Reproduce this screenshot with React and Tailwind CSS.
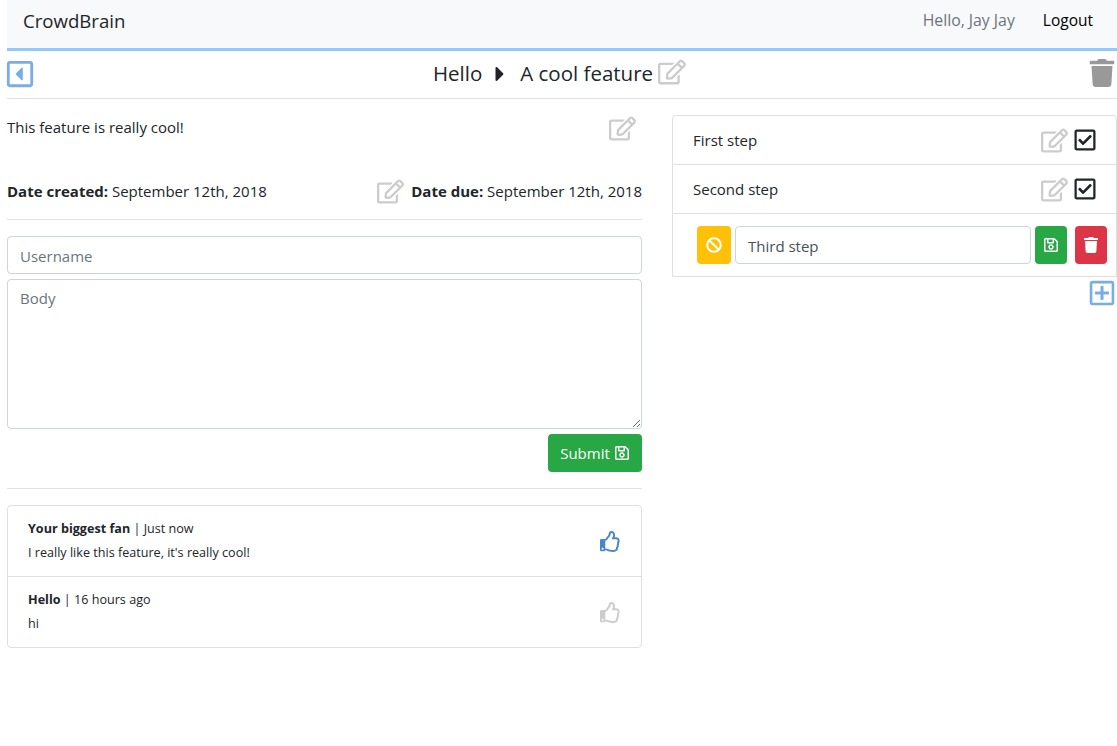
import {
  FaBan,
  FaCaretRight,
  FaRegCaretSquareLeft,
  FaRegCheckSquare,
  FaRegEdit,
  FaRegPlusSquare,
  FaRegSave,
  FaRegThumbsUp,
  FaTrash,
} from 'react-icons/fa'

const steps = ['First step', 'Second step']

const comments = [
  { author: 'Your biggest fan', when: 'Just now', body: "I really like this feature, it's really cool!", liked: true },
  { author: 'Hello', when: '16 hours ago', body: 'hi', liked: false },
]

function Comment({ author, when, body, liked }) {
  return (
    <div className="flex h-[71px] items-center justify-between border-b border-[#dfdfdf] px-5 last:h-[70px] last:border-b-0">
      <div className="text-[12.6px] leading-[18px]">
        <p className="mb-[6px]">
          <span className="font-bold">{author}</span> | {when}
        </p>
        <p>{body}</p>
      </div>
      <FaRegThumbsUp size={21} className={liked ? 'text-[#4a86d0]' : 'text-[#cccccc]'} />
    </div>
  )
}

export default function App() {
  return (
    <div className="min-h-[746px] bg-white pl-[7px] text-[15px] text-[#212529] font-['Open_Sans',sans-serif]">
      <nav className="flex h-[51px] items-center justify-between border-b-[3px] border-[#90c8ff] bg-[#f8f9fa] pb-[6px] pl-4 pr-6">
        <span className="text-[18.6px]">CrowdBrain</span>
        <div className="flex items-center gap-7 text-[15.5px]">
          <span className="text-[15.8px] text-[#6c757d]">Hello, Jay Jay</span>
          <span className="text-black">Logout</span>
        </div>
      </nav>

      <div className="flex h-[48px] items-center justify-between border-b border-[#e2e2e2] pb-[2px]">
        <FaRegCaretSquareLeft size={30} className="-ml-[2px] text-[#7aade6]" />
        <div className="mr-1 flex items-center text-[20.5px]">
          <span>Hello</span>
          <FaCaretRight size={24} className="ml-[6px] mr-[8px]" />
          <span>A cool feature</span>
          <FaRegEdit size={28} className="-mt-[3px] ml-[5px] text-[#cccccc]" />
        </div>
        <FaTrash size={28} className="-mt-[2px] mr-px text-[#999999]" />
      </div>

      <div className="flex gap-[30px]">
        <div className="w-[635px]">
          <div className="flex h-[58px] items-start justify-between pr-[6px] pt-4">
            <p className="mt-px">This feature is really cool!</p>
            <FaRegEdit size={27} className="text-[#cccccc]" />
          </div>

          <div className="flex h-[63px] items-center justify-between border-b border-[#e2e2e2] pb-[2px] pt-2">
            <p>
              <span className="font-bold">Date created:</span> September 12th, 2018
            </p>
            <div className="flex items-center gap-[7px]">
              <FaRegEdit size={27} className="text-[#cccccc]" />
              <p>
                <span className="font-bold">Date due:</span> September 12th, 2018
              </p>
            </div>
          </div>

          <div className="flex flex-col pt-4">
            <input
              placeholder="Username"
              className="h-[38px] rounded border border-[#ced4da] px-3 pt-[2px] text-[15px] outline-none placeholder:text-[#6c757d]"
            />
            <textarea
              placeholder="Body"
              className="mt-[5px] h-[150px] rounded border border-[#ced4da] px-3 pb-[6px] pt-[7px] text-[15px] outline-none placeholder:text-[#6c757d]"
            />
            <button className="mt-[5px] flex h-[38px] w-[94px] items-center justify-center gap-1 self-end rounded bg-[#28a745] text-white">
              Submit <FaRegSave size={16} />
            </button>
          </div>

          <div className="mt-4 border-t border-[#e2e2e2] pt-4">
            <div className="rounded border border-[#dfdfdf]">
              {comments.map((comment) => (
                <Comment key={comment.author} {...comment} />
              ))}
            </div>
          </div>
        </div>

        <div className="flex-1 pt-4">
          <div className="rounded-t border border-[#dfdfdf]">
            {steps.map((step) => (
              <div key={step} className="flex h-[49px] items-center justify-between border-b border-[#dfdfdf] pl-5 pr-[19px]">
                <span>{step}</span>
                <div className="flex items-center gap-[5px]">
                  <FaRegEdit size={27} className="text-[#cccccc]" />
                  <FaRegCheckSquare size={24} />
                </div>
              </div>
            ))}
            <div className="flex h-[62px] items-center gap-[4px] pl-6 pr-[9px]">
              <button className="flex h-[38px] w-[34px] shrink-0 items-center justify-center rounded bg-[#ffc107] text-white">
                <FaBan size={16} />
              </button>
              <input
                defaultValue="Third step"
                className="h-[38px] min-w-0 flex-1 rounded border border-[#ced4da] px-3 pt-[2px] text-[15px] text-[#495057] outline-none"
              />
              <button className="flex h-[38px] w-[32px] shrink-0 items-center justify-center rounded bg-[#28a745] text-white">
                <FaRegSave size={16} />
              </button>
              <button className="ml-1 flex h-[38px] w-[32px] shrink-0 items-center justify-center rounded bg-[#dc3545] text-white">
                <FaTrash size={16} />
              </button>
            </div>
          </div>
          <div className="flex justify-end pr-px pt-[2px]">
            <FaRegPlusSquare size={28} className="text-[#7aade6]" />
          </div>
        </div>
      </div>
    </div>
  )
}
